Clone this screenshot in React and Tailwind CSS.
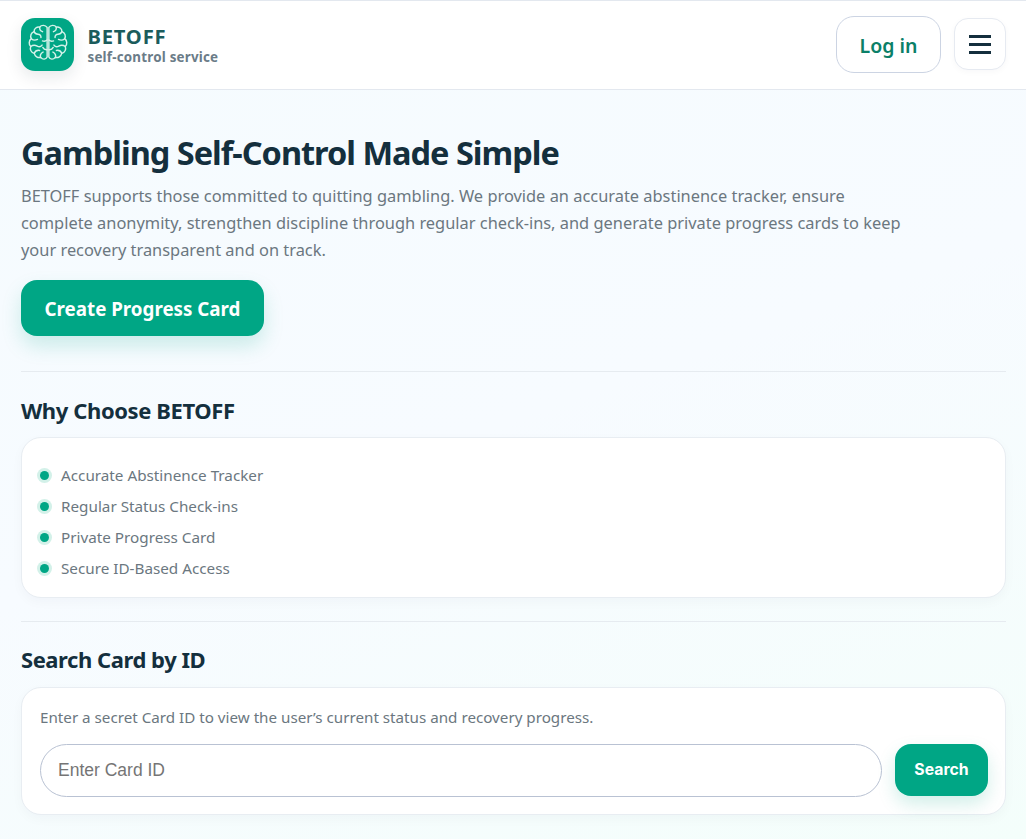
import React from "react";

const features = [
  "Accurate Abstinence Tracker",
  "Regular Status Check-ins",
  "Private Progress Card",
  "Secure ID-Based Access",
];

function BrainIcon() {
  return (
    <svg viewBox="4 3 32 34" className="w-[40px] h-[42px]" fill="none" stroke="#d5f2ea" strokeWidth="1.15" strokeLinecap="round" strokeLinejoin="round">
      <path d="M19.3 6.5c-1.4-2-4.6-2.2-6-.2-2.4-.4-4.6 1.3-4.6 3.7-2.4.9-3.4 3.6-2.2 5.7-2 1.5-2.3 4.5-.5 6.3-.9 2.4.4 5 2.9 5.600.5 2.400 2.900 3.900 5.200 3.200 1.600 2 4.200 1.900 5.200-.3z" />
      <path d="M20.7 6.5c1.4-2 4.6-2.2 6-.2 2.400-.4 4.600 1.300 4.600 3.700 2.400.9 3.400 3.600 2.200 5.700 2 1.500 2.300 4.500.5 6.300.9 2.400-.4 5-2.900 5.600-.5 2.400-2.900 3.900-5.200 3.200-1.600 2-4.200 1.900-5.200-.3z" />
      <path d="M13.3 6.5c-.2 1.8.8 3 2.3 3.5M8.7 10c.6 1.4 1.7 2.1 3.2 2.1 1.7 0 2.5 1.2 2.4 2.6M6.5 15.7c1.4 1.3 3.4 1.4 5 .6M6 22c1.6-1.2 3.6-1.3 5.3-.3 1.4.8 3 .4 3.900-.8M15.500 17.500c1.400.6 2.800.2 3.800-.7M8.800 27.600c.8-1.800 2.500-2.700 4.400-2.400M14 31c-.6-2 .2-3.600 2-4.500M15.800 22.800c.7 1.300 2 2 3.500 1.800" />
      <path d="M26.700 6.500c.2 1.800-.8 3-2.300 3.500M31.300 10c-.6 1.400-1.700 2.100-3.200 2.100-1.700 0-2.500 1.200-2.400 2.600M33.500 15.700c-1.400 1.300-3.400 1.400-5 .6M34 22c-1.600-1.200-3.600-1.300-5.300-.3-1.400.8-3 .4-3.900-.8M24.500 17.500c-1.400.6-2.800.2-3.800-.7M31.200 27.600c-.8-1.800-2.500-2.700-4.400-2.400M26 31c.6-2-.2-3.600-2-4.500M24.200 22.800c-.7 1.300-2 2-3.500 1.800" />
    </svg>
  );
}

function Header() {
  return (
    <header className="h-[90px] bg-white border-t border-b border-[#e3e8ef] pl-[21px] pr-[20px] pb-[2px] flex items-center justify-between">
      <div className="flex items-center gap-[13.5px]">
        <div className="w-[53px] h-[53px] rounded-[14px] bg-[#00a685] flex items-center justify-center shadow-[0_6px_16px_rgba(15,40,50,0.10)]">
          <BrainIcon />
        </div>
        <div className="flex flex-col">
          <span className="text-[20.2px] leading-[26px] font-bold tracking-[0.8px] text-[#1b5c5c]">BETOFF</span>
          <span className="text-[13.4px] leading-[16px] font-bold tracking-[0.2px] text-[#6b7c88]">self-control service</span>
        </div>
      </div>
      <div className="flex items-center gap-[13px]">
        <button className="w-[105px] h-[57px] pt-[4px] rounded-[18px] bg-white border border-[#ccd4e3] text-[#0b8068] text-[19.5px] font-semibold">
          Log in
        </button>
        <button className="w-[52px] h-[52px] rounded-[14px] bg-white border border-[#e6eaf1] flex flex-col items-center justify-center gap-[5px] shadow-[0_2px_6px_rgba(15,40,50,0.03)]">
          <span className="block w-[22px] h-[3px] bg-[#142f3d]" />
          <span className="block w-[22px] h-[3px] bg-[#142f3d]" />
          <span className="block w-[22px] h-[3px] bg-[#142f3d]" />
        </button>
      </div>
    </header>
  );
}

function App() {
  return (
    <div className="h-[839px] overflow-hidden bg-[linear-gradient(160deg,#f5fbfe_0%,#f7fbff_50%,#f4fefb_100%)] font-['Noto_Sans',sans-serif]">
      <Header />
      <main className="pl-[21px] pr-[20px]">
        <h1 className="mt-[40px] text-[32.5px] leading-[46px] font-bold tracking-[-1px] text-[#142f3d]">
          Gambling Self-Control Made Simple
        </h1>
        <p className="mt-[6px] max-w-[885px] text-[16.4px] leading-[27px] text-[#6b7780]">
          BETOFF supports those committed to quitting gambling. We provide an accurate abstinence tracker, ensure complete anonymity, strengthen discipline through regular check-ins, and generate private progress cards to keep your recovery transparent and on track.
        </p>
        <button className="mt-[17px] w-[243px] h-[56px] pt-[2px] rounded-[16px] bg-[#00a685] text-white text-[18.75px] font-bold shadow-[0_10px_20px_rgba(0,168,132,0.18)]">
          Create Progress Card
        </button>
        <hr className="mt-[35px] border-0 h-px bg-[#e6ebf0]" />

        <h2 className="mt-[23px] text-[22px] leading-[30px] font-bold tracking-[-0.4px] text-[#142f3d]">Why Choose BETOFF</h2>
        <section className="mt-[12px] h-[161px] bg-white rounded-[20px] border border-[#e8edf2] px-[15px] pt-[25px] shadow-[0_4px_12px_rgba(15,40,50,0.03)]">
          <ul className="flex flex-col gap-[7px]">
            {features.map((f) => (
              <li key={f} className="flex items-center gap-[9px] h-[24px] text-[15.25px] text-[#6b7780]">
                <span className="w-[15px] h-[15px] rounded-full bg-[#d3f1e9] flex items-center justify-center">
                  <span className="w-[9px] h-[9px] rounded-full bg-[#00a685]" />
                </span>
                {f}
              </li>
            ))}
          </ul>
        </section>
        <hr className="mt-[23px] border-0 h-px bg-[#e6ebf0]" />

        <h2 className="mt-[22px] text-[22px] leading-[30px] font-bold tracking-[-0.45px] text-[#142f3d]">Search Card by ID</h2>
        <section className="mt-[13px] h-[128px] bg-white rounded-[20px] border border-[#e8edf2] pl-[18px] pr-[17px] pt-[18px] shadow-[0_4px_12px_rgba(15,40,50,0.03)]">
          <p className="text-[15.2px] leading-[22px] text-[#6b7780]">
            Enter a secret Card ID to view the user’s current status and recovery progress.
          </p>
          <div className="mt-[16px] flex items-start gap-[13px]">
            <input
              placeholder="Enter Card ID"
              className="flex-1 h-[53px] rounded-full border border-[#b9c2d3] px-[17px] text-[17.5px] font-['Liberation_Sans',sans-serif] bg-white outline-none placeholder:text-[#757575]"
            />
            <button className="w-[93px] h-[52px] rounded-[16px] bg-[#00a685] text-white text-[15.8px] font-bold font-['Inter',sans-serif] shadow-[0_8px_18px_rgba(0,168,132,0.18)]">
              Search
            </button>
          </div>
        </section>
      </main>
    </div>
  );
}

export default App;
